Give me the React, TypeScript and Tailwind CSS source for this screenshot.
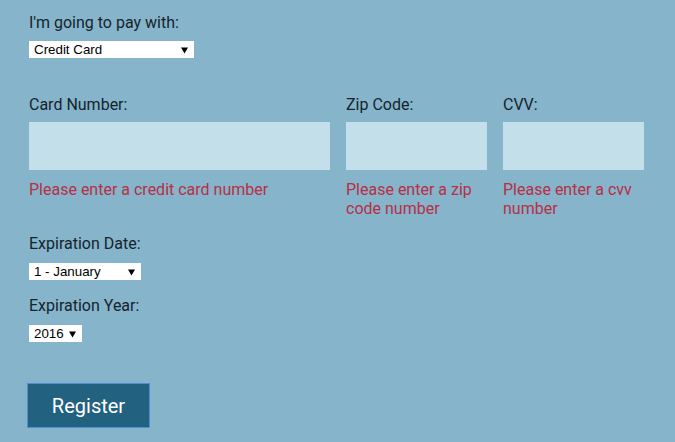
import { useState } from 'react';

const months = [
  'January', 'February', 'March', 'April', 'May', 'June',
  'July', 'August', 'September', 'October', 'November', 'December',
];

function Caret() {
  return (
    <svg width="7" height="7" viewBox="0 0 7 7" className="pointer-events-none absolute top-[6px] right-[6px]">
      <path d="M0 0.5 H7 L3.5 6.5 Z" fill="#000" />
    </svg>
  );
}

function PlainSelect({
  width,
  value,
  options,
  onChange,
}: {
  width: string;
  value: string;
  options: string[];
  onChange: (v: string) => void;
}) {
  return (
    <div className={`relative h-[17px] ${width}`}>
      <select
        value={value}
        onChange={(e) => onChange(e.target.value)}
        className="block h-[17px] w-full appearance-none bg-white pl-[5px] pr-4 text-[13.33px] leading-[17px] text-black outline-none [font-family:'Liberation_Sans',Arial,sans-serif]"
      >
        {options.map((o) => (
          <option key={o} value={o}>
            {o}
          </option>
        ))}
      </select>
      <Caret />
    </div>
  );
}

function Field({ label, error }: { label: string; error: string }) {
  return (
    <div className="flex flex-col">
      <label className="leading-[19px]">{label}</label>
      <input type="text" className="mt-[8px] h-[48px] w-full bg-[#c2dfea] px-2 outline-none" />
      <p className="mt-[10px] leading-[19px] text-[#b92f45]">{error}</p>
    </div>
  );
}

export default function App() {
  const [method, setMethod] = useState('Credit Card');
  const [month, setMonth] = useState('1 - January');
  const [year, setYear] = useState('2016');

  return (
    <div className="min-h-screen bg-[#85b4cb] pl-[29px] pt-[13px] text-[16px] text-[#15242d] [font-family:Roboto,'Liberation_Sans',sans-serif]">
      <form className="flex flex-col" onSubmit={(e) => e.preventDefault()}>
        <label className="leading-[19px]">I'm going to pay with:</label>
        <div className="mt-[9px]">
          <PlainSelect
            width="w-[165px]"
            value={method}
            options={['Credit Card', 'PayPal', 'Bitcoin']}
            onChange={setMethod}
          />
        </div>

        <div className="mt-[37px] grid grid-cols-[301px_141px_141px] gap-x-[16px]">
          <Field label="Card Number:" error="Please enter a credit card number" />
          <Field label="Zip Code:" error="Please enter a zip code number" />
          <Field label="CVV:" error="Please enter a cvv number" />
        </div>

        <label className="mt-[16px] leading-[19px]">Expiration Date:</label>
        <div className="mt-[10px]">
          <PlainSelect
            width="w-[112px]"
            value={month}
            options={months.map((m, i) => `${i + 1} - ${m}`)}
            onChange={setMonth}
          />
        </div>

        <label className="mt-[16px] leading-[19px]">Expiration Year:</label>
        <div className="mt-[10px]">
          <PlainSelect
            width="w-[53px]"
            value={year}
            options={['2016', '2017', '2018', '2019', '2020']}
            onChange={setYear}
          />
        </div>

        <div className="mt-[41px] -ml-[2px]">
          <button
            type="submit"
            className="h-[45px] w-[123px] border border-[#4f8fcf] bg-[#22617f] text-[20px] text-white"
          >
            Register
          </button>
        </div>
      </form>
    </div>
  );
}
